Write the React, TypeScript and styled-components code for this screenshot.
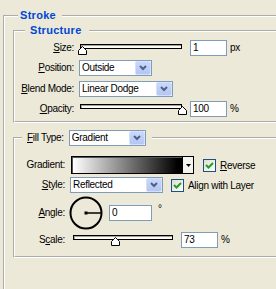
import React from "react";
import styled, { createGlobalStyle } from "styled-components";

const GlobalStyle = createGlobalStyle`
  html, body {
    margin: 0;
    padding: 0;
    overflow: hidden;
  }
  body {
    background: #ece9d8;
    font-family: "Liberation Sans", Arial, sans-serif;
    font-size: 10px;
    letter-spacing: -0.3px;
    color: #000;
  }
`;

const Screen = styled.div`
  width: 276px;
  height: 289px;
  overflow: hidden;
  background: #ece9d8;
`;

const Group = styled.fieldset<{ $top: number; $left: number; $bottom: number }>`
  margin: ${(p) => p.$top}px -60px 0 ${(p) => p.$left}px;
  padding: 0 0 ${(p) => p.$bottom}px 0;
  border: 2px groove #fff;
  min-width: 0;
`;

const Legend = styled.legend<{ $shift: number; $pad: string }>`
  margin-left: ${(p) => p.$shift}px;
  padding: ${(p) => p.$pad};
  font-size: 11px;
  font-weight: bold;
  letter-spacing: 0.3px;
  line-height: 13px;
  color: #0046d5;
`;

const FillLegend = styled.legend`
  display: flex;
  align-items: center;
  gap: 5px;
  margin-left: 7px;
  padding: 0 6px 0 5px;
  line-height: 12px;
`;

const Form = styled.div<{ $label: number; $rows: string; $rowGap: number; $top: number; $bottom: number }>`
  display: grid;
  grid-template-columns: ${(p) => p.$label}px max-content;
  grid-template-rows: ${(p) => p.$rows};
  column-gap: 5px;
  row-gap: ${(p) => p.$rowGap}px;
  align-items: center;
  margin: ${(p) => p.$top}px 0 ${(p) => p.$bottom}px 0;
`;

const Label = styled.div`
  text-align: right;
  white-space: nowrap;
  line-height: 12px;
`;

const Key = styled.span`
  text-decoration: underline;
  text-underline-offset: 1px;
`;

const Cell = styled.div<{ $gap?: number }>`
  display: flex;
  align-items: center;
  gap: ${(p) => p.$gap ?? 3}px;
  height: 100%;
  white-space: nowrap;
`;

const Field = styled.div<{ $w: number }>`
  width: ${(p) => p.$w}px;
  height: 16px;
  box-sizing: border-box;
  border: 1px solid #7f9db9;
  background: #fff;
  padding-left: 2px;
  line-height: 14px;
`;

const Unit = styled.span<{ $raise?: number }>`
  margin-bottom: ${(p) => p.$raise ?? 0}px;
  line-height: 12px;
`;

const Select = styled.div<{ $w: number }>`
  display: flex;
  align-items: center;
  width: ${(p) => p.$w}px;
  height: 16px;
  box-sizing: border-box;
  border: 1px solid #7f9db9;
  background: #fff;
  padding-left: 2px;
  font-weight: normal;
  color: #000;
  letter-spacing: -0.3px;
  font-size: 10px;
`;

const SelectText = styled.span`
  flex: 1;
  line-height: 14px;
  overflow: hidden;
`;

const SelectButton = styled.span`
  display: flex;
  align-items: center;
  justify-content: center;
  width: 16px;
  height: 14px;
  box-sizing: border-box;
  border: 1px solid #d5e0fb;
  border-radius: 2px;
  background: linear-gradient(#c9d8fc, #b3c6f3);
`;

const SliderBox = styled.div<{ $w: number; $top: number; $shift: number }>`
  position: relative;
  align-self: flex-start;
  width: ${(p) => p.$w}px;
  height: 11px;
  margin-top: ${(p) => p.$top}px;
  margin-left: ${(p) => p.$shift}px;
`;

const Track = styled.div`
  margin: 0 5px 0 2px;
  height: 5px;
  box-sizing: border-box;
  border: 1px solid #000;
  background: #fbfbf7;
  box-shadow: inset 1px 1px 0 #a5a292;
`;

const Thumb = styled.svg`
  position: absolute;
  top: 2px;
  width: 9px;
  height: 9px;
`;

const GradientBar = styled.div`
  display: flex;
  width: 123px;
  height: 18px;
  margin-left: 1px;
  box-sizing: border-box;
  border: 1px solid #000;
  box-shadow: inset 1px 1px 0 #555;
`;

const GradientFill = styled.div`
  flex: 1;
  margin: 1px 0 0 1px;
  background: linear-gradient(to right, #ffffff, #000000 96%);
`;

const GradientArrow = styled.div`
  display: flex;
  align-items: center;
  justify-content: center;
  width: 10px;
  border-left: 1px solid #000;
  background: #f4f3ee;
`;

const Check = styled.div`
  display: flex;
  align-items: center;
  gap: 4px;
`;

const Box = styled.span`
  display: flex;
  align-items: center;
  justify-content: center;
  width: 13px;
  height: 13px;
  box-sizing: border-box;
  border: 1px solid #1c5180;
  background: linear-gradient(135deg, #dcdcd7, #ffffff);
`;

const Dial = styled.svg`
  width: 34px;
  height: 34px;
  margin-left: -1px;
`;

const Chevron = () => (
  <svg width="8" height="6" viewBox="0 0 8 6">
    <polyline points="1,1 4,4 7,1" fill="none" stroke="#4d6185" strokeWidth="2" />
  </svg>
);

const Dropdown = ({ w, text }: { w: number; text: string }) => (
  <Select $w={w}>
    <SelectText>{text}</SelectText>
    <SelectButton>
      <Chevron />
    </SelectButton>
  </Select>
);

const Slider = ({ w, value, top, shift }: { w: number; value: number; top: number; shift: number }) => (
  <SliderBox $w={w} $top={top} $shift={shift}>
    <Track />
    <Thumb viewBox="0 0 9 9" style={{ left: Math.round(value * (w - 9)) }}>
      <polygon points="4.5,0.5 8.5,4.5 8.5,8.5 0.5,8.5 0.5,4.5" fill="#fff" stroke="#000" />
    </Thumb>
  </SliderBox>
);

const CheckBox = ({ children }: { children: React.ReactNode }) => (
  <Check>
    <Box>
      <svg width="9" height="9" viewBox="0 0 9 9">
        <polyline points="1,4 3.5,6.5 8,2" fill="none" stroke="#21a121" strokeWidth="2" />
      </svg>
    </Box>
    <span>{children}</span>
  </Check>
);

export default function App() {
  return (
    <Screen>
      <GlobalStyle />
      <Group $top={9} $left={3} $bottom={60}>
        <Legend $shift={13} $pad="0 6px 0 2px">Stroke</Legend>

        <Group $top={2} $left={8} $bottom={0}>
          <Legend $shift={10} $pad="0 7px 0 5px">Structure</Legend>
          <Form $label={59} $rows="repeat(4, 16px)" $rowGap={4.4} $top={3} $bottom={4}>
            <Label>
              <Key>S</Key>ize:
            </Label>
            <Cell>
              <Slider w={109} value={0} top={4} shift={-1} />
              <Field $w={37}>1</Field>
              <Unit>px</Unit>
            </Cell>

            <Label>
              <Key>P</Key>osition:
            </Label>
            <Dropdown w={73} text="Outside" />

            <Label>
              <Key>B</Key>lend Mode:
            </Label>
            <Dropdown w={94} text="Linear Dodge" />

            <Label>
              <Key>O</Key>pacity:
            </Label>
            <Cell>
              <Slider w={109} value={1} top={3} shift={-1} />
              <Field $w={37}>100</Field>
              <Unit>%</Unit>
            </Cell>
          </Form>
        </Group>

        <Group $top={7} $left={8} $bottom={0}>
          <FillLegend>
            <span>
              <Key>F</Key>ill Type:
            </span>
            <Dropdown w={77} text="Gradient" />
          </FillLegend>
          <Form $label={50} $rows="18px 16px 33px 16px" $rowGap={3} $top={10} $bottom={8}>
            <Label>Gradient:</Label>
            <Cell $gap={9}>
              <GradientBar>
                <GradientFill />
                <GradientArrow>
                  <svg width="5" height="3" viewBox="0 0 5 3">
                    <polygon points="0,0 5,0 2.5,3" fill="#000" />
                  </svg>
                </GradientArrow>
              </GradientBar>
              <CheckBox>
                <Key>R</Key>everse
              </CheckBox>
            </Cell>

            <Label>
              <Key>S</Key>tyle:
            </Label>
            <Cell $gap={8}>
              <Dropdown w={93} text="Reflected" />
              <CheckBox>Align with Layer</CheckBox>
            </Cell>

            <Label>
              <Key>A</Key>ngle:
            </Label>
            <Cell $gap={6}>
              <Dial viewBox="0 0 34 34">
                <circle cx="17" cy="17" r="15.5" fill="none" stroke="#000" strokeWidth="2" />
                <line x1="17" y1="17" x2="32" y2="17" stroke="#000" strokeWidth="1.5" />
                <rect x="15.5" y="15.5" width="3" height="3" fill="#000" />
              </Dial>
              <Field $w={43}>0</Field>
              <Unit $raise={8}>°</Unit>
            </Cell>

            <Label>
              S<Key>c</Key>ale:
            </Label>
            <Cell>
              <Slider w={107} value={0.41} top={3} shift={1} />
              <Field $w={37}>73</Field>
              <Unit>%</Unit>
            </Cell>
          </Form>
        </Group>
      </Group>
    </Screen>
  );
}
